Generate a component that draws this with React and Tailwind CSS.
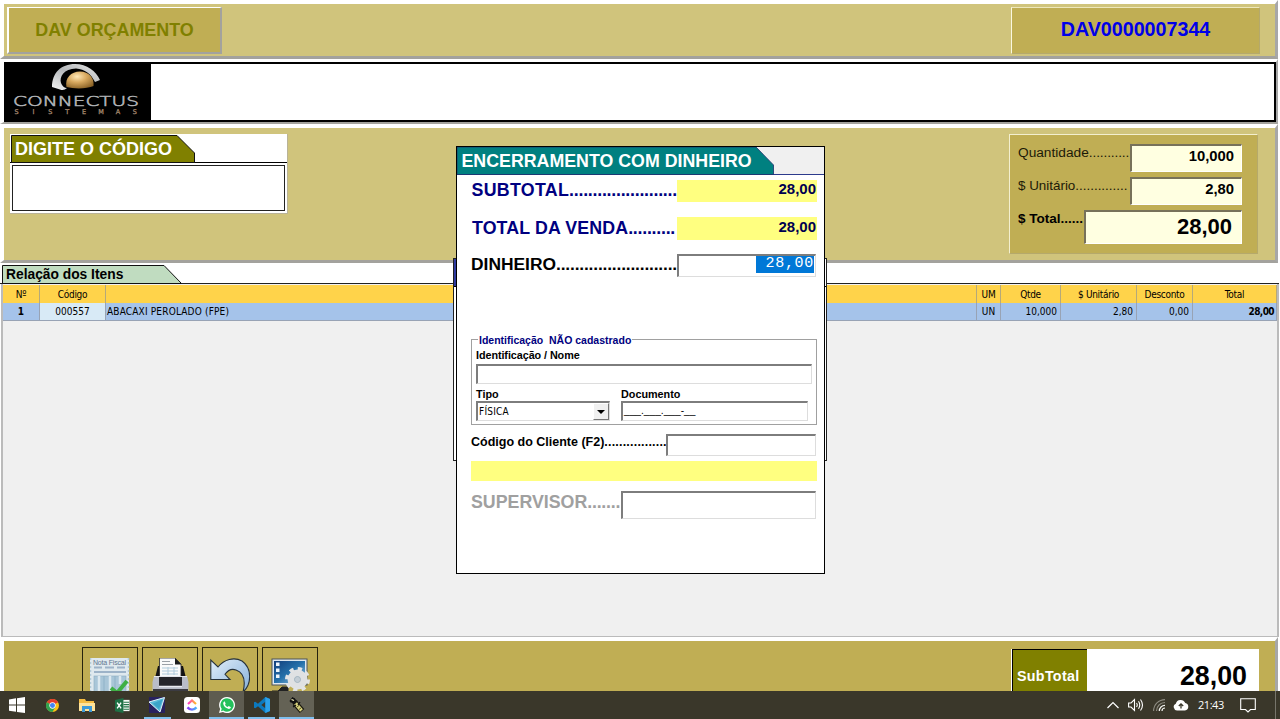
import React from "react";

const arial = "font-['Liberation_Sans',Arial,sans-serif]";
const tahoma = "font-['DejaVu_Sans_Condensed','DejaVu_Sans',sans-serif]";

function Logo() {
  return (
    <svg viewBox="0 0 147 58" className="h-[58px] w-[147px] shrink-0">
      <defs>
        <radialGradient id="ball" cx="40%" cy="30%" r="75%">
          <stop offset="0" stopColor="#ffe9b8" />
          <stop offset="0.45" stopColor="#d9aa60" />
          <stop offset="1" stopColor="#8a6226" />
        </radialGradient>
        <linearGradient id="arc" x1="0" y1="1" x2="1" y2="0">
          <stop offset="0" stopColor="#f4f4f4" />
          <stop offset="0.5" stopColor="#b4b7ba" />
          <stop offset="1" stopColor="#e8e8e8" />
        </linearGradient>
      </defs>
      <rect width="147" height="58" fill="#000" />
      <path d="M48 23 C48 9 57 0 71 0 C83 0 92 7 96 16 L91 18 C87 10 81 5 72 4.500 C60 4.500 55 13 57 19 Q59 24 63 24 Q60 27 56 25.500 Z" fill="url(#arc)" />
      <path d="M62.500 23 C60.500 14 67 7.500 76 7.500 C85 7.500 90.500 14 89.500 22 C83 25 70 25 62.500 23Z" fill="url(#ball)" />
      <text x="9" y="42" fontFamily="DejaVu Sans, sans-serif" fontWeight="200" fontSize="14.500" fill="#aeb0b3" stroke="#aeb0b3" strokeWidth=".6" textLength="126" lengthAdjust="spacingAndGlyphs">CONNECTUS</text>
      <g fontFamily="DejaVu Sans, sans-serif" fontSize="6.500" fill="#a2856c" stroke="#a2856c" strokeWidth=".3" textAnchor="middle">
        {["S", "I", "S", "T", "E", "M", "A", "S"].map((c, i) => (
          <text key={i} x={12.5 + i * 16.9} y="50">{c}</text>
        ))}
      </g>
    </svg>
  );
}

function NoteIcon() {
  return (
    <svg viewBox="0 0 40 44" className="h-[44px] w-[40px]">
      <path d="M0 0H39V44H0Z" fill="#dfe9ee" />
      <path d="M.5 0V44M38.500 0V44" stroke="#b4ccd8" strokeWidth="1.500" strokeDasharray="2 2" />
      <text x="3" y="7" fontSize="7" fontFamily="Liberation Sans, sans-serif" fill="#5f7690" textLength="33" lengthAdjust="spacing">Nota Fiscal</text>
      <path d="M4 9.500H12M15 9.500H24M27 9.500H35M4 14H36" stroke="#9db3c8" strokeWidth="2.200" />
      <rect x="4" y="18" width="32" height="17" fill="#a9c6d8" stroke="#8cabc0" strokeWidth=".6" />
      <path d="M9 18V35M20 18V35M30 18V26" stroke="#dbe8ef" strokeWidth="2.500" />
      <path d="M14 18V35M25 18V35" stroke="#8fb2c8" strokeWidth="1" />
      <path d="M21 30L27 35L37 23" fill="none" stroke="#3fb044" strokeWidth="4" />
    </svg>
  );
}

function PrinterIcon() {
  return (
    <svg viewBox="0 0 40 44" className="h-[44px] w-[40px]">
      <path d="M8 8H33L36 20H5Z" fill="#121214" />
      <path d="M9.500 0H25L31 6V19H9.500Z" fill="#fafafa" stroke="#2a2a2a" strokeWidth=".8" />
      <path d="M25 0V6.500H31.500Z" fill="#1c1c1c" />
      <path d="M12 3.500H20M12 6.500H23" stroke="#9a9fa5" strokeWidth="1" />
      <path d="M12 10H28M12 13H28M12 16H28M18 9V17M24 9V17" stroke="#b0cbdc" strokeWidth="1" />
      <path d="M4 18H9V28H32V18H37L38.500 24V44H2.500V24Z" fill="#b9bdc8" />
      <path d="M4 18.500H37" stroke="#e4e6ec" strokeWidth="1" />
      <path d="M9 19H32V28H9Z" fill="#26262b" />
      <path d="M9 28.500H32" stroke="#e9ebf0" strokeWidth="1.500" />
      <path d="M3 31H38V33H3Z" fill="#3b3b42" />
    </svg>
  );
}

function UndoIcon() {
  return (
    <svg viewBox="0 0 40 44" className="h-[44px] w-[40px]">
      <defs>
        <linearGradient id="undo" x1="0" y1="0" x2="1" y2="1">
          <stop offset="0" stopColor="#e2effb" />
          <stop offset="1" stopColor="#84afd9" />
        </linearGradient>
      </defs>
      <path d="M.8 2V21.500H20L15 16.300C18 12 22 10.500 26 12C33 14.500 36 22 33 34C42 26 42 10 32 3C24 -1.500 14 1.500 8 9Z" fill="url(#undo)" stroke="#26323c" strokeWidth="1.100" />
    </svg>
  );
}

function ConfigIcon() {
  return (
    <svg viewBox="0 0 40 44" className="h-[44px] w-[40px]">
      <defs>
        <linearGradient id="screen" x1="0" y1="0" x2="1" y2="1">
          <stop offset="0" stopColor="#123f7c" />
          <stop offset="0.5" stopColor="#2470aa" />
          <stop offset="1" stopColor="#9bc5e0" />
        </linearGradient>
      </defs>
      <rect x="2" y="1" width="35" height="26" fill="#dfe8ef" stroke="#4b5358" />
      <rect x="4" y="3" width="31" height="22" fill="url(#screen)" />
      <path d="M6 4.500H9.500V8H6ZM6 10.500H9.500V14H6ZM6 16.500H9.500V20H6Z" fill="#edf5fb" />
      <path d="M8 33L12 29H18V33ZM2 33H8" fill="#222" stroke="#222" />
      <circle cx="27.500" cy="21.500" r="6.500" fill="none" stroke="#dfe1e3" strokeWidth="7" />
      <circle cx="27.500" cy="21.500" r="10.500" fill="none" stroke="#e2e4e6" strokeWidth="4" strokeDasharray="4.120 4.120" />
      <circle cx="27.500" cy="21.500" r="3" fill="#c3cdd5" stroke="#a9b4bc" strokeWidth=".7" />
    </svg>
  );
}

const taskIcons = {
  win: (
    <svg viewBox="0 0 16 16" className="h-4 w-4"><path d="M0 2.400L7 1.300V7.500H0ZM8 1.200L16 0V7.500H8ZM0 8.500H7V14.700L0 13.700ZM8 8.500H16V16L8 14.900Z" fill="#fff" /></svg>
  ),
  chrome: (
    <svg viewBox="0 0 24 24" className="h-[13px] w-[13px]">
      <circle cx="12" cy="12" r="12" fill="#fbc116" />
      <path d="M12 12L1.600 6A12 12 0 0 1 22.400 6Z" fill="#e33b2e" />
      <path d="M12 12L1.600 6A12 12 0 0 0 12 24L17 15Z" fill="#31a350" />
      <circle cx="12" cy="12" r="5.800" fill="#fff" /><circle cx="12" cy="12" r="4.600" fill="#4285f4" />
    </svg>
  ),
  folder: (
    <svg viewBox="0 0 16 14" className="h-[14px] w-[16px]">
      <path d="M0 1H6L7 3H15V13H0Z" fill="#f5bc42" /><path d="M0 5H16V13H0Z" fill="#ffe39a" />
      <path d="M3 14V8H13V14H10V11H6V14Z" fill="#3d9ad8" />
    </svg>
  ),
  excel: (
    <svg viewBox="0 0 16 16" className="h-[15px] w-[15px]">
      <rect x="8" y="2" width="7.500" height="12" fill="#f3f8f4" />
      <path d="M9 4.500H15M9 7H15M9 9.500H15M9 12H15" stroke="#217346" strokeWidth="1.200" />
      <path d="M0 2L9 0V16L0 14Z" fill="#1e7145" /><path d="M2.300 5L6.500 11M6.500 5L2.300 11" stroke="#fff" strokeWidth="1.500" />
    </svg>
  ),
  plane: (
    <svg viewBox="0 0 16 16" className="h-4 w-4">
      <rect width="16" height="16" fill="#28215f" /><path d="M0 5L15.500 .5L11 15Z" fill="#58b9d8" stroke="#e4f5fa" strokeWidth="1" /><path d="M4 6.500L13.500 2.500L10 12Z" fill="#3aa3c8" />
    </svg>
  ),
  clickup: (
    <svg viewBox="0 0 16 16" className="h-4 w-4">
      <defs>
        <linearGradient id="cuA"><stop stopColor="#ff36c8" /><stop offset="1" stopColor="#ffbd22" /></linearGradient>
        <linearGradient id="cuB"><stop stopColor="#8a38f5" /><stop offset="1" stopColor="#45b8fa" /></linearGradient>
      </defs>
      <rect width="16" height="16" rx="3.500" fill="#fff" />
      <path d="M4 7L8 3.500L12 7" fill="none" stroke="url(#cuA)" strokeWidth="2.200" />
      <path d="M3.500 10.300Q8 15 12.500 10.300" fill="none" stroke="url(#cuB)" strokeWidth="2.400" />
    </svg>
  ),
  whats: (
    <svg viewBox="0 0 24 24" className="h-4 w-4">
      <path d="M12 0A12 12 0 1 1 6 22.400L0 24L1.700 18A12 12 0 0 1 12 0Z" fill="#fff" />
      <path d="M12 2A10 10 0 1 1 6.500 20.300L3 21.200L4 17.800A10 10 0 0 1 12 2Z" fill="#25c15c" />
      <path d="M8.500 6.500L10 10L9 11.500Q10.500 14 13 15L14.500 13.600L18 15.300Q17 18.200 14 17.800Q7.500 15.800 6.300 10Q6 7.500 8.500 6.500Z" fill="#fff" />
    </svg>
  ),
  code: (
    <svg viewBox="0 0 24 24" className="h-4 w-4">
      <path d="M17 0L24 3V21L17 24L6 14L2 17L0 16V8L2 7L6 10ZM17 7L11 12L17 17Z" fill="#0c79bd" fillRule="evenodd" />
      <path d="M17 0L24 3V21L17 24Z" fill="#2ca2ea" />
    </svg>
  ),
  bug: (
    <svg viewBox="0 0 18 18" className="h-[18px] w-[18px]">
      <path d="M3 3L8 7" stroke="#111" strokeWidth="5" />
      <path d="M7 7L14 15" stroke="#17160d" strokeWidth="6" />
      <path d="M7.500 7.500L13.500 14.500" stroke="#d8d27c" strokeWidth="3.600" />
      <path d="M4 2L7 3M2 6L5 5M5 11L8 9M12 6L10 9" stroke="#111" strokeWidth="1.300" />
      <path d="M3.500 3.500L6 4.500" stroke="#f7f3bb" strokeWidth="1.300" />
      <path d="M9 11L11.500 9M11 13.500L13.500 11.500" stroke="#4a461c" strokeWidth=".9" />
    </svg>
  ),
};

const tasks = [
  ["win", "", ""],
  ["chrome", "", ""],
  ["folder", "", ""],
  ["excel", "", ""],
  ["plane", "", "w-[27px]"],
  ["clickup", "", ""],
  ["whats", "bg-[#5e5c50]", "w-full"],
  ["code", "", "w-[27px]"],
  ["bug", "bg-[#646255]", "w-full"],
];

function Taskbar() {
  return (
    <div className="flex h-7 shrink-0 items-stretch bg-[#3a372a] text-white">
      {tasks.map(([k, bg, line]) => (
        <div key={k} className={`flex w-[34.9px] flex-col items-center ${bg}`}>
          <div className="flex h-[26px] items-center justify-center pt-[2px]">{taskIcons[k]}</div>
          {line && <div className={`h-[2px] bg-[#7fbfee] ${line}`} />}
        </div>
      ))}
      <div className="flex-1" />
      <div className="flex items-center pr-[19px]">
        <svg viewBox="0 0 12 8" className="mr-[9px] h-2 w-3"><path d="M.5 7L6 1.500L11.500 7" fill="none" stroke="#fff" strokeWidth="1.200" /></svg>
        <svg viewBox="0 0 16 14" className="mr-[9px] h-[14px] w-4">
          <path d="M.6 5H3L6.500 1.500V12.500L3 9H.6Z" fill="none" stroke="#fff" strokeWidth="1.100" />
          <path d="M8.500 5Q10 7 8.500 9M10.500 3.300Q13 7 10.500 10.700M12.500 1.500Q16.500 7 12.500 12.500" fill="none" stroke="#fff" strokeWidth="1.100" />
        </svg>
        <svg viewBox="0 0 12 12" className="mr-[8px] h-3 w-3">
          <path d="M.6 12A11.400 11.400 0 0 1 12 .6M3.500 12A8.500 8.500 0 0 1 12 3.500" fill="none" stroke="#8d8b81" strokeWidth="1.100" />
          <path d="M6.300 12A5.700 5.700 0 0 1 12 6.300M9 12A3 3 0 0 1 12 9" fill="none" stroke="#f2f2ee" strokeWidth="1.200" />
        </svg>
        <svg viewBox="0 0 16 12" className="mr-[9px] h-3 w-4">
          <path d="M4 11.500A3.500 3.500 0 0 1 2.800 4.800A5 5 0 0 1 12.200 4A3.800 3.800 0 0 1 12 11.500Z" fill="#fff" />
          <path d="M8 9.500V5.500M5.800 7L8 4.800L10.200 7" fill="none" stroke="#3a372a" strokeWidth="1.300" />
        </svg>
        <span className="w-[26px] font-['Open_Sans','Noto_Sans',sans-serif] text-[11px] tracking-[-0.45px] whitespace-nowrap">21:43</span>
        <svg viewBox="0 0 16 15" className="ml-[16px] h-[15px] w-4"><path d="M.7 .7H15.300V11.500H10.500L8 14L5.500 11.500H.7Z" fill="none" stroke="#fff" strokeWidth="1.100" /></svg>
      </div>
      <div className="mr-[4px] w-px bg-[#77756b]" />
    </div>
  );
}

const inset = "border-t-2 border-l-2 border-r border-b border-t-[#7d7d7d] border-l-[#7d7d7d] border-r-[#ddd] border-b-[#ddd] bg-white";

function Header() {
  return (
    <div className="mr-[2px] flex h-[59px] shrink-0 border-t-4 border-l-4 border-r-[3px] border-b-[3px] border-t-white border-l-white border-r-[#a7a7a7] border-b-[#a3a29d] bg-[#d0c47c]">
      <div className="mt-[3px] ml-[3px] flex h-[47px] w-[215px] items-center justify-center border-t border-l-2 border-r-2 border-b-2 border-t-white border-l-white border-r-[#a3a29d] border-b-[#a3a29d] bg-[#c0ae54] text-[17.9px] font-bold text-[#808000]">
        DAV ORÇAMENTO
      </div>
      <div className="flex-1" />
      <div className="mt-[3px] mr-[15px] flex h-[47px] w-[249px] items-center justify-center border border-t-[#eee8bd] border-l-[#fbf8e0] border-r-[#b5a96b] border-b-[#b5a96b] bg-[#c0ae54] pb-[2px] text-[19.7px] font-bold text-[#0000e8]">
        DAV0000007344
      </div>
    </div>
  );
}

function QtyPanel() {
  const field = "flex justify-end border-t-2 border-l-2 border-r border-b border-t-[#77715a] border-l-[#77715a] border-r-white border-b-white bg-[#ffffe1] font-bold text-black";
  return (
    <div className="mt-[6px] mr-[17px] h-[120px] w-[249px] border border-t-[#f3efcf] border-l-[#f3efcf] border-r-[#b5a96b] border-b-[#b5a96b] bg-[#c0ae54] pl-[8px] text-[#1c1a08]">
      <div className="mt-[9px] flex h-[33px]">
        <div className="w-[112px] text-[13.7px] leading-[17px] whitespace-nowrap">Quantidade<span className="tracking-[-0.13px]">...........</span></div>
        <div className={`${field} h-[28px] w-[112px] pr-[7px] pt-px text-[14.8px] leading-[18px]`}>10,000</div>
      </div>
      <div className="flex h-[33px]">
        <div className="w-[112px] text-[13.4px] leading-[17px] whitespace-nowrap">$ Unitário<span>..............</span></div>
        <div className={`${field} h-[28px] w-[112px] pr-[7px] pt-px text-[14.8px] leading-[18px]`}>2,80</div>
      </div>
      <div className="flex">
        <div className="w-[66px] text-[13.5px] leading-[17px] font-bold whitespace-nowrap text-black">$ Total......</div>
        <div className={`${field} h-[34px] w-[158px] pr-[9px] pt-[2px] text-[22px] leading-[26px]`}>28,00</div>
      </div>
    </div>
  );
}

function Items() {
  const cols = "grid grid-cols-[37px_66px_871px_24px_60px_76px_56px_84px]";
  const h = "flex items-center justify-center border-r border-[#b5a97a]";
  const c = "flex items-center border-r border-[#98a3b5]";
  return (
    <div className="mr-px flex h-[374px] shrink-0 flex-col">
      <div className="flex h-[21px] border-b border-[#222] bg-white pl-[2px]">
        <div className="relative mt-[2px] h-[19px] w-[180px]">
          <svg viewBox="0 0 180 19" className="absolute inset-0 h-[19px] w-[180px]"><path d="M.5 18.500V.5H162L179.500 18.500Z" fill="#c0dcc0" stroke="#111" /></svg>
          <span className="relative block pl-[4px] text-[13.8px] leading-[19px] font-bold whitespace-nowrap">Relação dos Itens</span>
        </div>
      </div>
      <div className={`ml-px flex-1 border-r-2 border-b border-l-2 border-l-[#bbb] border-r-[#bbb] border-b-[#bbb] bg-[#f0f0f0] text-[10px] ${tahoma}`}>
        <div className={`${cols} mt-px h-[18px] bg-[#ffd34a] tracking-[-0.3px]`}>
          {["Nº", "Código", "", "UM", "Qtde", "$ Unitário", "Desconto", "Total"].map((t, i) => <div key={i} className={h}>{t}</div>)}
        </div>
        <div className={`${cols} h-[18px] border-b border-[#98a3b5] bg-[#a5c3ea]`}>
          <div className={`${c} justify-center font-bold`}>1</div>
          <div className={`${c} justify-center bg-[#d8eaf6]`}>000557</div>
          <div className={`${c} pl-[1px] tracking-[0.17px]`}>ABACAXI PEROLADO (FPE)</div>
          <div className={`${c} justify-center`}>UN</div>
          <div className={`${c} justify-end pr-[3px]`}>10,000</div>
          <div className={`${c} justify-end pr-[3px]`}>2,80</div>
          <div className={`${c} justify-end pr-[3px]`}>0,00</div>
          <div className={`${c} justify-end pr-[2px] font-bold tracking-[-0.6px]`}>28,00</div>
        </div>
      </div>
    </div>
  );
}

function Footer() {
  return (
    <div className="mr-[2px] flex h-[54px] shrink-0 overflow-hidden border-t-4 border-r-[3px] border-l-4 border-t-white border-l-white border-r-[#a7a7a7] bg-[#c0ae54]">
      <div className="mt-[6px] ml-[78px] flex gap-[4px]">
        {[NoteIcon, PrinterIcon, UndoIcon, ConfigIcon].map((Icon, i) => (
          <div key={i} className="flex h-[56px] w-[56px] justify-center border border-[#26230e] pt-[10px]"><Icon /></div>
        ))}
      </div>
      <div className="flex-1" />
      <div className="mt-[8px] mr-[16px] flex h-[56px] w-[248px] bg-white pl-px">
        <div className="w-[75px] shrink-0 border-t border-l border-black bg-[#808000] pt-[17px] pl-[4px] text-[14.3px] leading-[18px] font-bold tracking-[0.3px] text-white">SubTotal</div>
        <div className="flex-1 pt-[12px] pr-[12px] text-right text-[26.8px] leading-[30px] font-bold">28,00</div>
      </div>
    </div>
  );
}

function PaymentDialog() {
  const label = "shrink-0 font-bold whitespace-nowrap";
  return (
    <div className="absolute top-[146px] left-[456px] flex h-[428px] w-[369px] flex-col border border-black bg-white">
      <div className="relative h-[28px] border-b border-[#2c3a8c] bg-[#f0f0f0]">
        <svg viewBox="0 0 318 28" className="absolute top-0 left-0 h-[28px] w-[318px]"><path d="M0 0H299L316.500 18V27.500H0Z" fill="#008080" stroke="#1e2f6e" strokeWidth=".8" /></svg>
        <span className="relative block pl-[4.500px] text-[17.8px] leading-[28px] font-bold whitespace-nowrap text-white">ENCERRAMENTO COM DINHEIRO</span>
      </div>
      <div className="pr-[7px] pl-[14px]">
        <div className="mt-[5px] flex h-[37px] text-[#000080]">
          <div className={`${label} w-[206px] pl-[0.5px] text-[17.8px] leading-[21px]`}><span className="tracking-[0.3px]">SUBTOTAL</span><span className="tracking-[-0.25px]">.......................</span></div>
          <div className="h-[22px] flex-1 bg-[#ffff80] pr-px text-right text-[15px] leading-[18px] font-bold text-[#000050]">28,00</div>
        </div>
        <div className="flex h-[37px] text-[#000080]">
          <div className={`${label} w-[206px] pl-px text-[17.8px] leading-[23px]`}><span className="tracking-[0.12px]">TOTAL DA VENDA</span><span className="tracking-[-0.25px]">..........</span></div>
          <div className="h-[23px] flex-1 bg-[#ffff80] pr-px text-right text-[15px] leading-[19px] font-bold text-[#000050]">28,00</div>
        </div>
        <div className="flex h-[81px]">
          <div className={`${label} w-[206px] text-[17.4px] leading-[20px]`}>DINHEIRO<span className="tracking-[-0.18px]">..........................</span></div>
          <div className={`flex h-[23px] w-[139px] justify-end pr-px ${inset}`}>
            <span className="h-[17px] w-[58px] bg-[#0078d7] text-right font-['Liberation_Mono','Courier_New',monospace] text-[15px] leading-[16px] tracking-[0.7px] text-white">28,00</span>
          </div>
        </div>
        <div className="relative mt-[4px] h-[86px] w-[346px] border border-[#a0a0a0] pt-[8px] pl-[4px] text-[10.8px] font-bold">
          <span className="absolute -top-[6px] left-[6px] bg-white px-px text-[10.5px] leading-[12px] whitespace-pre text-[#000080]">Identificação  NÃO cadastrado</span>
          <div className="leading-[14px] tracking-[-0.07px]">Identificação / Nome</div>
          <div className={`mt-[2px] h-[20px] w-[336px] ${inset}`} />
          <div className="mt-[4px] flex">
            <div className="w-[145px]">
              <div className="leading-[13px]">Tipo</div>
              <div className={`flex h-[20px] w-[134px] ${inset}`}>
                <span className={`flex-1 pl-px text-[10px] leading-[17px] font-normal tracking-[0.2px] ${tahoma}`}>FÍSICA</span>
                <span className="flex w-[16px] items-center justify-center border border-t-white border-l-white border-r-[#777] border-b-[#777] bg-[#f0f0f0]">
                  <svg viewBox="0 0 8 4" className="h-1 w-2"><path d="M0 0H8L4 4Z" fill="#000" /></svg>
                </span>
              </div>
            </div>
            <div>
              <div className="leading-[13px]">Documento</div>
              <div className={`h-[20px] w-[187px] pl-px text-[10.2px] leading-[16px] font-normal ${inset}`}>___.___.___-__</div>
            </div>
          </div>
        </div>
        <div className="mt-[9px] flex h-[27px]">
          <div className={`${label} w-[195px] text-[12.5px] leading-[16px]`}>Código do Cliente (F2)<span className="tracking-[0.2px]">.................</span></div>
          <div className={`h-[22px] w-[150px] ${inset}`} />
        </div>
        <div className="h-[20px] w-[346px] bg-[#ffff80]" />
        <div className="mt-[10px] flex">
          <div className={`${label} w-[150px] text-[17.8px] leading-[22px] text-[#a0a0a0]`}>SUPERVISOR<span className="tracking-[-0.25px]">.......</span></div>
          <div className={`h-[28px] w-[195px] ${inset}`} />
        </div>
      </div>
    </div>
  );
}

export default function App() {
  return (
    <div className={`relative flex h-[719px] w-[1280px] flex-col overflow-hidden bg-white text-black ${arial}`}>
      <Header />
      <div className="mr-[2px] flex h-[65px] shrink-0 border-t-[3px] border-r-2 border-b-[2px] border-l-4 border-t-white border-r-[#a7a7a7] border-b-[#a3a29d] border-l-white">
        <div className="flex flex-1 border-t-2 border-r-2 border-b-2 border-black bg-white">
          <Logo />
        </div>
      </div>
      <div className="mr-[2px] flex h-[139px] shrink-0 border-t-4 border-r-[3px] border-b-[3px] border-l-4 border-t-white border-r-[#a7a7a7] border-b-[#a3a29d] border-l-white bg-[#d0c47c]">
        <div className="mt-[6px] ml-[6px] h-[80px] w-[278px] border-r border-b border-[#b9b397] bg-white">
          <div className="relative h-[29px] border-b border-black">
            <svg viewBox="0 0 186 29" className="absolute top-0 left-0 h-[29px] w-[186px]"><path d="M1.500 28.500V1.500H167L184.500 19V28.500Z" fill="#808000" stroke="#111" /></svg>
            <span className="relative block pl-[5px] text-[18px] leading-[30px] font-bold whitespace-nowrap text-white">DIGITE O CÓDIGO</span>
          </div>
          <div className="mt-[2px] ml-[2px] h-[46px] w-[273px] border border-[#222]" />
        </div>
        <div className="flex-1" />
        <QtyPanel />
      </div>
      <Items />
      <Footer />
      <Taskbar />
      <div className="absolute top-[258px] left-[453px] h-[203px] w-[374px] border border-[#222] bg-white">
        <div className="h-[28px] w-full border-b border-black bg-[linear-gradient(to_right,#2f3a9e_6px,#fff_6px)]" />
      </div>
      <PaymentDialog />
    </div>
  );
}
